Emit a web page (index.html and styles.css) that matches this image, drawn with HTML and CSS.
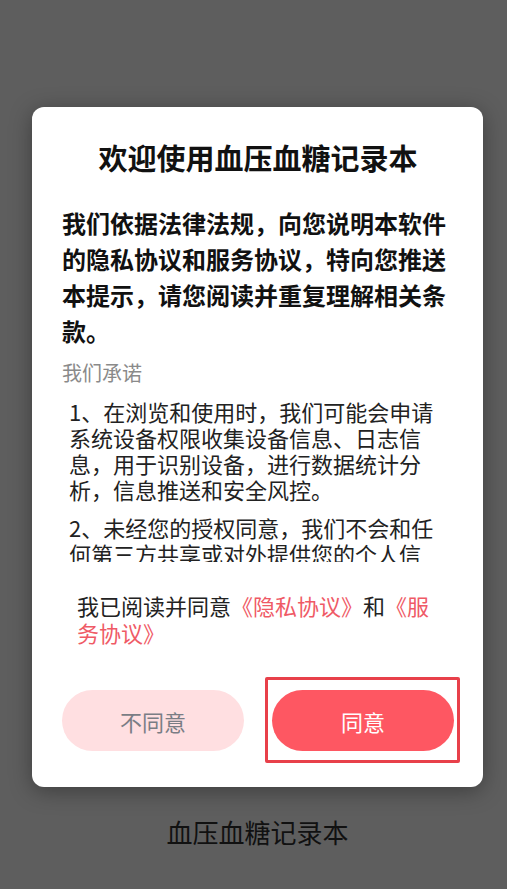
FILE: index.html
```html
<!DOCTYPE html>
<html lang="zh-CN">

<head>
	<meta charset="UTF-8">
	<meta name="viewport" content="width=device-width, initial-scale=1.0">
	<title>血压血糖记录本</title>

	<link rel="stylesheet" href="styles.css">
</head>

<body>
	<div class="screen">
		<section class="privacy-dialog">
			<h1 class="dialog-title">欢迎使用血压血糖记录本</h1>

			<p class="dialog-intro">
				我们依据法律法规，向您说明本软件的隐私协议和服务协议，特向您推送本提示，请您阅读并重复理解相关条款。
			</p>

			<div class="promise-box">
				<div class="promise-label">我们承诺</div>
				<p class="promise-item">1、在浏览和使用时，我们可能会申请系统设备权限收集设备信息、日志信息，用于识别设备，进行数据统计分析，信息推送和安全风控。</p>
				<p class="promise-item">2、未经您的授权同意，我们不会和任何第三方共享或对外提供您的个人信息。</p>
			</div>

			<p class="agreement">
				我已阅读并同意<a class="link">《隐私协议》</a>和<a class="link">《服务协议》</a>
			</p>

			<div class="dialog-buttons">
				<button class="btn btn-refuse">不同意</button>
				<button class="btn btn-agree">同意</button>
			</div>
		</section>

		<footer class="app-name">血压血糖记录本</footer>
	</div>
</body>

</html>
```

FILE: styles.css
```css
*,
*::before,
*::after {
	margin: 0;
	padding: 0;
	box-sizing: border-box;

	font-family: "Noto Sans CJK SC", "Noto Sans", sans-serif;

	--primary-color: #111;
	--text-color: #222;
	--muted-color: #8a8a8a;
	--accent-color: #fe5762;
	--accent-light-color: #ffdfe1;
	--background-color: #5e5e5e;
	--basic-light-color: #fff;
}

body {
	background-color: var(--background-color);
}

.screen {
	width: 100%;
	height: 889px;
	overflow: hidden;

	display: flex;
	flex-direction: column;
	align-items: flex-start;

	padding-top: 107px;
	padding-left: 32px;
}

.privacy-dialog {
	width: 451px;
	padding: 30px 29px 36px 30px;

	display: flex;
	flex-direction: column;

	border-radius: 12px;
	background-color: var(--basic-light-color);
	box-shadow: 0 4px 22px rgba(0, 0, 0, 0.35);
}

.dialog-title {
	height: 40px;

	font-size: 29px;
	line-height: 40px;
	font-weight: bold;
	text-align: center;
	color: var(--primary-color);
}

.dialog-intro {
	margin-top: 28px;

	font-size: 24px;
	line-height: 36px;
	font-weight: bold;
	color: var(--primary-color);
}

.promise-box {
	height: 203px;
	margin-top: 10px;
	overflow: hidden;
}

.promise-label {
	font-size: 20px;
	line-height: 28px;
	color: var(--muted-color);
	margin-bottom: 11px;
}

.promise-item {
	padding: 0 15px 0 7px;

	font-size: 22px;
	line-height: 26px;
	color: var(--text-color);
}

.promise-item + .promise-item {
	margin-top: 12px;
}

.agreement {
	margin-top: 30px;
	padding: 0 20px 0 15px;

	font-size: 22px;
	line-height: 27px;
	color: var(--text-color);
}

.agreement .link {
	color: #ef5a66;
}

.dialog-buttons {
	margin-top: 44px;

	display: flex;
	justify-content: space-between;
}

.btn {
	width: 182px;
	height: 61px;

	position: relative;

	border: none;
	border-radius: 31px;
	font-size: 22px;
}

.btn-refuse {
	background-color: var(--accent-light-color);
	color: #7a7d85;
}

.btn-agree {
	background-color: var(--accent-color);
	color: var(--basic-light-color);
}

/* highlight frame round the agree button */
.btn-agree::after {
	content: "";
	position: absolute;
	top: -13px;
	right: -6px;
	bottom: -12px;
	left: -7px;

	border: 3px solid #e8404a;
	border-radius: 2px;
}

.app-name {
	width: 451px;
	margin-top: 27px;

	font-size: 26px;
	line-height: 36px;
	text-align: center;
	color: var(--primary-color);
}
```
